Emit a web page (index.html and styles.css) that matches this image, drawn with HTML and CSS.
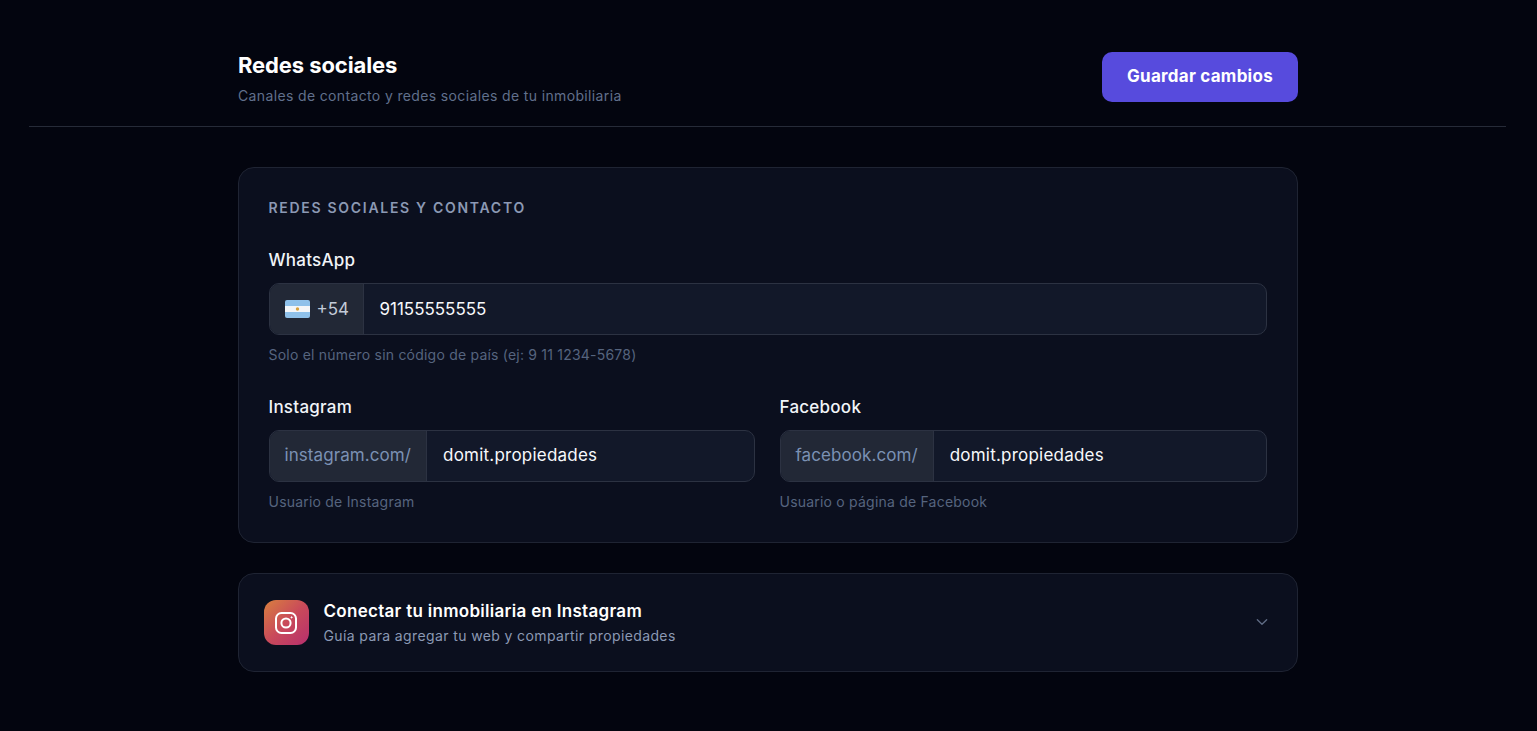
FILE: index.html
```html
<!DOCTYPE html>
<html lang="en">
<head>
<meta charset="UTF-8" />
<title>Redes sociales</title>
<link rel="stylesheet" href="styles.css">
</head>
<body>
<div class="page">
    <div class="top-bar">
        <div class="top-inner">
            <div>
                <h1>Redes sociales</h1>
                <p class="subtitle">Canales de contacto y redes sociales de tu inmobiliaria</p>
            </div>
            <button class="btn-save">Guardar cambios</button>
        </div>
    </div>

    <div class="content">
        <section class="card">
            <h2 class="card-title">REDES SOCIALES Y CONTACTO</h2>

            <div class="field">
                <label class="label">WhatsApp</label>
                <div class="input-group">
                    <div class="addon addon-phone">
                        <svg class="flag" viewBox="0 0 25 18" width="25" height="18">
                            <rect width="25" height="18" rx="2" fill="#8fc1ea"/>
                            <rect y="6" width="25" height="6" fill="#f4f6f8"/>
                            <circle cx="12.5" cy="9" r="1.7" fill="#d9a13c"/>
                        </svg>
                        <span>+54</span>
                    </div>
                    <div class="value value-phone">91155555555</div>
                </div>
                <p class="hint">Solo el número sin código de país (ej: 9 11 1234-5678)</p>
            </div>

            <div class="field-row">
                <div class="field">
                    <label class="label">Instagram</label>
                    <div class="input-group">
                        <div class="addon addon-url">instagram.com/</div>
                        <div class="value">domit.propiedades</div>
                    </div>
                    <p class="hint">Usuario de Instagram</p>
                </div>
                <div class="field">
                    <label class="label">Facebook</label>
                    <div class="input-group">
                        <div class="addon addon-url">facebook.com/</div>
                        <div class="value">domit.propiedades</div>
                    </div>
                    <p class="hint">Usuario o página de Facebook</p>
                </div>
            </div>
        </section>

        <section class="card-guide">
            <div class="ig-icon">
                <svg viewBox="0 0 24 24" width="24" height="24" fill="none" stroke="#fff" stroke-width="2">
                    <rect x="2" y="2" width="20" height="20" rx="5.5"/>
                    <circle cx="12" cy="12" r="4.6"/>
                    <circle cx="17.6" cy="6.4" r="0.6" fill="#fff" stroke-width="1"/>
                </svg>
            </div>
            <div class="guide-text">
                <div class="guide-title">Conectar tu inmobiliaria en Instagram</div>
                <div class="guide-sub">Guía para agregar tu web y compartir propiedades</div>
            </div>
            <svg class="chevron" viewBox="0 0 24 24" width="16" height="16" fill="none" stroke="#5f6b84" stroke-width="2" stroke-linecap="round" stroke-linejoin="round">
                <path d="M5 7l7 7 7-7"/>
            </svg>
        </section>
    </div>
</div>
</body>
</html>
```

FILE: styles.css
```css
/* Reset and base styles */
* {margin: 0; padding: 0; box-sizing: border-box;}
body {
    font-family: Inter, "Noto Sans", Arial, sans-serif;
    background: #03050f;
    color: #fff;
    min-height: 100vh;
}
.page {
    padding: 0 31px 0 29px;
}
.top-bar {
    border-bottom: 1px solid #262b38;
    padding: 52px 0 24px;
}
.top-inner {
    width: 1060px;
    margin: 0 auto;
    display: flex;
    justify-content: space-between;
    align-items: center;
    position: relative;
    left: 0.5px;
}
h1 {
    font-size: 22px;
    line-height: 27px;
    font-weight: 700;
    letter-spacing: -0.1px;
    color: #fff;
}
.subtitle {
    margin-top: 8px;
    margin-bottom: -3px;
    font-size: 14px;
    line-height: 18px;
    letter-spacing: 0.36px;
    color: #61708c;
}
.btn-save {
    width: 196px;
    height: 50px;
    border: none;
    border-radius: 10px;
    background: #574bdd;
    color: #fff;
    font-family: inherit;
    font-size: 17px;
    font-weight: 700;
    letter-spacing: 0.25px;
    padding-bottom: 2px;
}
.content {
    width: 1060px;
    margin: 40px auto 0;
    display: flex;
    flex-direction: column;
    gap: 30px;
}
.card {
    height: 376px;
    padding: 32px 30px 0;
    background: #0b0f1e;
    border: 1px solid #1f2433;
    border-radius: 16px;
}
.card-title {
    font-size: 14px;
    line-height: 16px;
    font-weight: 600;
    letter-spacing: 1.7px;
    color: #8c99b4;
    margin-bottom: 34px;
}
.label {
    display: block;
    font-size: 17px;
    line-height: 20px;
    font-weight: 500;
    letter-spacing: 0.25px;
    color: #f1f4f8;
    margin-bottom: 13px;
}
.input-group {
    display: flex;
    height: 52px;
    background: #121829;
    border: 1px solid #2c3242;
    border-radius: 10px;
    overflow: hidden;
}
.addon {
    display: flex;
    align-items: center;
    background: #222836;
    border-right: 1px solid #2c3242;
    font-size: 17px;
    padding-bottom: 2px;
}
.addon-phone {
    gap: 7px;
    padding-left: 15px;
    padding-right: 15px;
    padding-bottom: 0;
    color: #c4cbd8;
    width: 94px;
}
.addon-url {
    padding-left: 15px;
    padding-right: 15px;
    color: #7b91b4;
    letter-spacing: 0.08px;
}
.flag {
    flex: none;
}
.value {
    display: flex;
    align-items: center;
    padding: 0 16px 2px;
    font-size: 17px;
    letter-spacing: 0.22px;
    color: #f7f9fc;
}
.value-phone {
    padding-bottom: 1px;
    letter-spacing: -0.02px;
}
.hint {
    margin-top: 11px;
    font-size: 14px;
    line-height: 18px;
    letter-spacing: 0.21px;
    color: #56647e;
}
.field-row {
    display: grid;
    grid-template-columns: 486px 487px;
    gap: 25px;
    margin-top: 33px;
}
.card-guide {
    height: 99px;
    padding: 0 27px 0 25px;
    display: flex;
    align-items: center;
    background: #0b0f1e;
    border: 1px solid #1f2433;
    border-radius: 16px;
}
.ig-icon {
    width: 45px;
    height: 45px;
    flex: none;
    border-radius: 12px;
    background: linear-gradient(135deg, #d9803f 0%, #c94a5a 50%, #b72f6e 100%);
    display: flex;
    align-items: center;
    justify-content: center;
}
.guide-text {
    flex: 1;
    margin-left: 15px;
}
.guide-title {
    font-size: 17px;
    line-height: 21px;
    font-weight: 600;
    letter-spacing: 0.29px;
    color: #fff;
}
.guide-sub {
    margin-top: 5px;
    margin-bottom: -1px;
    font-size: 14px;
    line-height: 18px;
    letter-spacing: 0.38px;
    color: #8c99b4;
}
```
